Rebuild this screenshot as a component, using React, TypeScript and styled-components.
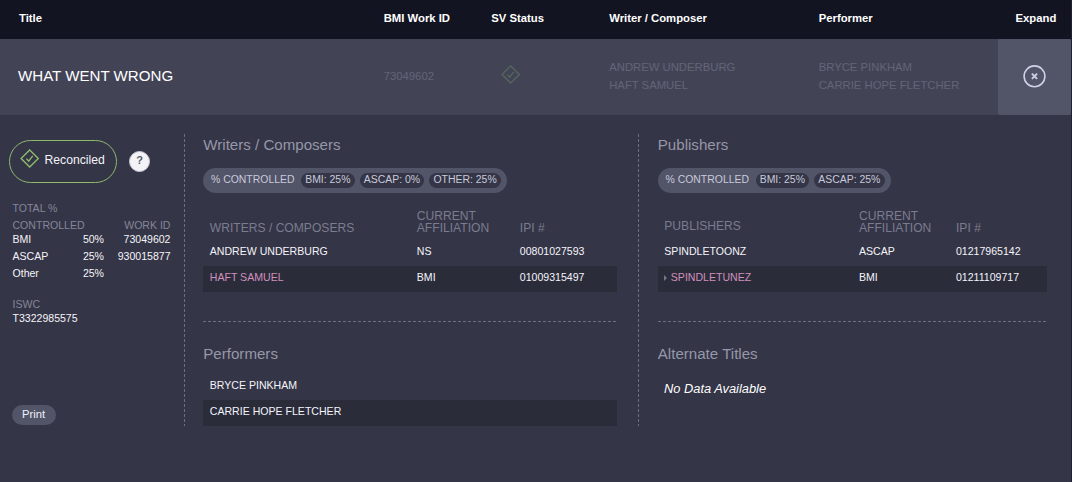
import React from "react";
import styled, { createGlobalStyle } from "styled-components";

const Global = createGlobalStyle`
  * { box-sizing: border-box; }
  body {
    margin: 0;
    background: #343546;
    color: #f4f4fa;
    font-family: "Liberation Sans", Arial, sans-serif;
  }
`;

const Page = styled.main`
  width: 1072px;
  height: 482px;
  overflow: hidden;
  background: #343546;
  border-right: 1px solid #20212f;
`;

const GridRow = styled.div`
  display: grid;
  grid-template-columns: 383.7px 107.5px 118px 209.5px 179.3px 1fr;
`;

const HeaderRow = styled(GridRow)`
  height: 39px;
  background: #131422;
  font-size: 11.3px;
  font-weight: bold;
  line-height: 37px;
  color: #fff;
`;

const HeaderCell = styled.div<{ $pad?: number }>`
  padding-left: ${(p) => p.$pad ?? 0}px;
  white-space: nowrap;
`;

const WorkRow = styled(GridRow)`
  height: 76px;
  padding-bottom: 2px;
  align-items: center;
  background: #424456;
  font-size: 11.3px;
  line-height: 18px;
  color: #636577;
`;

const WorkTitle = styled.div`
  padding-left: 18px;
  font-size: 15.1px;
  color: #fff;
`;

const Faded = styled.div`
  padding-left: 9.5px;
  height: 22px;
`;

const ExpandCell = styled.button`
  height: 76px;
  border: 0;
  padding: 0 1px 2px 0;
  margin-bottom: -2px;
  border-radius: 2px;
  background: #525468;
  display: flex;
  align-items: center;
  justify-content: center;
`;

const Details = styled.div`
  display: flex;
  height: 311px;
  padding-top: 19px;
`;

const dashV = `
  background-image: repeating-linear-gradient(to bottom, #6d6f80 0 3px, transparent 3px 5px);
  background-size: 1px 100%;
  background-position: right top;
  background-repeat: no-repeat;
`;

const Sidebar = styled.aside`
  width: 185px;
  padding: 6px 14.5px 0 9px;
  display: flex;
  flex-direction: column;
  ${dashV}
`;

const StatusLine = styled.div`
  display: flex;
  align-items: center;
  gap: 12px;
`;

const StatusPill = styled.div`
  width: 108px;
  height: 43px;
  border: 1px solid #8fb96d;
  border-radius: 22px;
  display: flex;
  padding: 8px 0 0 9.5px;
  gap: 5px;
  font-size: 12.2px;
  line-height: 22px;
`;

const Help = styled.button`
  width: 21px;
  height: 21px;
  border: 1px solid #c9cad3;
  border-radius: 50%;
  padding: 0 0 3px;
  background: #f3f3f7;
  color: #5b5c68;
  font: bold 11px/15px "Liberation Sans", Arial, sans-serif;
`;

const Totals = styled.div`
  display: grid;
  grid-template-columns: 1fr 67px;
  margin: 17px 0 0 3.5px;
  font-size: 10.55px;
  line-height: 17px;
  color: #85869a;
  align-items: end;
`;

const Shares = styled.div`
  display: grid;
  grid-template-columns: 50px 41.5px 1fr;
  margin: -3px 0 0 3.5px;
  font-size: 10.55px;
  line-height: 17px;
`;

const Right = styled.span`
  text-align: right;
`;

const Iswc = styled.div`
  margin: 15px 0 0 3.5px;
  font-size: 10.55px;
  line-height: 14px;
`;

const Muted = styled.div`
  color: #85869a;
`;

const PrintButton = styled.button`
  width: 44px;
  height: 20px;
  margin: auto 0 1px 3px;
  border: 0;
  border-radius: 10px;
  padding: 0 1px 2px 0;
  background: #525468;
  color: #f0f0f8;
  font: 11.25px/18px "Liberation Sans", Arial, sans-serif;
`;

const Column = styled.section<{ $width: number; $divided?: boolean; $left: number; $right: number }>`
  width: ${(p) => p.$width}px;
  padding: 0 ${(p) => p.$right}px 0 ${(p) => p.$left}px;
  height: 292px;
  ${(p) => (p.$divided ? dashV : "")}
`;

const UpperBlock = styled.div`
  height: 188px;
  background-image: repeating-linear-gradient(to right, #6d6f80 0 3px, transparent 3px 5px);
  background-size: 100% 1px;
  background-position: left bottom;
  background-repeat: no-repeat;
`;

const LowerBlock = styled.div`
  padding-top: 21px;
`;

const Heading = styled.h2`
  margin: 0;
  padding-left: 0.3px;
  font-size: 15.1px;
  font-weight: normal;
  line-height: 22px;
  color: #9697a9;
`;

const Controlled = styled.div`
  display: inline-flex;
  align-items: center;
  height: 25px;
  margin-top: 12px;
  padding: 0 6px 0 8px;
  border-radius: 13px;
  background: #525468;
  color: #c9cadb;
  font-size: 10.45px;
  vertical-align: top;
  white-space: nowrap;
`;

const ControlledLabel = styled.span`
  margin-right: 1.5px;
  line-height: 14px;
  padding-bottom: 1px;
`;

const Share = styled.span`
  height: 15px;
  margin-left: 5px;
  padding: 0 4.2px;
  border-radius: 8px;
  background: #343546;
  line-height: 14px;
`;

const Table = styled.div<{ $cols: string }>`
  & > div {
    display: grid;
    grid-template-columns: ${(p) => p.$cols};
    padding-left: 6.8px;
  }
`;

const TableHead = styled.div`
  height: 47px;
  padding-bottom: 6px;
  align-items: end;
  font-size: 12.1px;
  line-height: 12px;
  color: #7b7c90;
`;

const HeadCell = styled.span<{ $lift?: boolean }>`
  padding-bottom: ${(p) => (p.$lift ? 2 : 0)}px;
`;

const TableRow = styled.div<{ $dark?: boolean }>`
  height: 26px;
  font-size: 10.57px;
  line-height: 22px;
  background: ${(p) => (p.$dark ? "#2b2c3a" : "transparent")};
`;

const Pink = styled.span`
  color: #cf90bd;
`;

const Arrow = styled.i`
  display: inline-block;
  margin-right: 3.5px;
  border-left: 3px solid #747587;
  border-top: 3px solid transparent;
  border-bottom: 3px solid transparent;
`;

const Names = styled(Table)`
  margin-top: 9px;
`;

const Empty = styled.p`
  margin: 14px 0 0 6.5px;
  font-size: 12.85px;
  line-height: 20px;
  font-style: italic;
  color: #fff;
`;

const CheckDiamond = ({ color }: { color: string }) => (
  <svg width="20" height="20" viewBox="0 0 20 20" fill="none" stroke={color} strokeWidth="1.4">
    <path d="M9.7 .9 18.3 9.5 9.7 18.1 1.1 9.5Z" />
    <path d="m6.4 9.6 2.3 2.5 4-5.3" />
  </svg>
);

const CloseCircle = () => (
  <svg width="24" height="24" viewBox="0 0 24 24" fill="none" stroke="#cfd0e6">
    <circle cx="12.5" cy="12.3" r="10.4" strokeWidth="1.6" />
    <path d="m9.9 9.7 5.2 5.2m0-5.2-5.2 5.2" strokeWidth="1.9" />
  </svg>
);

const ControlledBar = ({ shares }: { shares: string[] }) => (
  <Controlled>
    <ControlledLabel>% CONTROLLED</ControlledLabel>
    {shares.map((s) => (
      <Share key={s}>{s}</Share>
    ))}
  </Controlled>
);

export default function App() {
  return (
    <Page>
      <Global />
      <HeaderRow>
        <HeaderCell $pad={19}>Title</HeaderCell>
        <HeaderCell>BMI Work ID</HeaderCell>
        <HeaderCell>SV Status</HeaderCell>
        <HeaderCell>Writer / Composer</HeaderCell>
        <HeaderCell>Performer</HeaderCell>
        <HeaderCell $pad={17.5}>Expand</HeaderCell>
      </HeaderRow>
      <WorkRow>
        <WorkTitle>WHAT WENT WRONG</WorkTitle>
        <div>73049602</div>
        <Faded>
          <CheckDiamond color="#55655c" />
        </Faded>
        <div>
          ANDREW UNDERBURG
          <br />
          HAFT SAMUEL
        </div>
        <div>
          BRYCE PINKHAM
          <br />
          CARRIE HOPE FLETCHER
        </div>
        <ExpandCell aria-label="Collapse">
          <CloseCircle />
        </ExpandCell>
      </WorkRow>
      <Details>
        <Sidebar>
          <StatusLine>
            <StatusPill>
              <CheckDiamond color="#8fb96d" />
              Reconciled
            </StatusPill>
            <Help>?</Help>
          </StatusLine>
          <Totals>
            <span>TOTAL % CONTROLLED</span>
            <Right>WORK ID</Right>
          </Totals>
          <Shares>
            <span>BMI</span>
            <Right>50%</Right>
            <Right>73049602</Right>
            <span>ASCAP</span>
            <Right>25%</Right>
            <Right>930015877</Right>
            <span>Other</span>
            <Right>25%</Right>
          </Shares>
          <Iswc>
            <Muted>ISWC</Muted>
            T3322985575
          </Iswc>
          <PrintButton>Print</PrintButton>
        </Sidebar>
        <Column $width={454} $left={18} $right={22} $divided>
          <UpperBlock>
            <Heading>Writers / Composers</Heading>
            <ControlledBar shares={["BMI: 25%", "ASCAP: 0%", "OTHER: 25%"]} />
            <Table $cols="207px 103px 1fr">
              <TableHead>
                <HeadCell>WRITERS / COMPOSERS</HeadCell>
                <HeadCell>CURRENT AFFILIATION</HeadCell>
                <HeadCell>IPI #</HeadCell>
              </TableHead>
              <TableRow>
                <span>ANDREW UNDERBURG</span>
                <span>NS</span>
                <span>00801027593</span>
              </TableRow>
              <TableRow $dark>
                <Pink>HAFT SAMUEL</Pink>
                <span>BMI</span>
                <span>01009315497</span>
              </TableRow>
            </Table>
          </UpperBlock>
          <LowerBlock>
            <Heading>Performers</Heading>
            <Names $cols="1fr">
              <TableRow>BRYCE PINKHAM</TableRow>
              <TableRow $dark>CARRIE HOPE FLETCHER</TableRow>
            </Names>
          </LowerBlock>
        </Column>
        <Column $width={432} $left={18.5} $right={24}>
          <UpperBlock>
            <Heading>Publishers</Heading>
            <ControlledBar shares={["BMI: 25%", "ASCAP: 25%"]} />
            <Table $cols="194.7px 97px 1fr">
              <TableHead>
                <HeadCell $lift>PUBLISHERS</HeadCell>
                <HeadCell>CURRENT AFFILIATION</HeadCell>
                <HeadCell>IPI #</HeadCell>
              </TableHead>
              <TableRow>
                <span>SPINDLETOONZ</span>
                <span>ASCAP</span>
                <span>01217965142</span>
              </TableRow>
              <TableRow $dark>
                <Pink>
                  <Arrow />
                  SPINDLETUNEZ
                </Pink>
                <span>BMI</span>
                <span>01211109717</span>
              </TableRow>
            </Table>
          </UpperBlock>
          <LowerBlock>
            <Heading>Alternate Titles</Heading>
            <Empty>No Data Available</Empty>
          </LowerBlock>
        </Column>
      </Details>
    </Page>
  );
}
